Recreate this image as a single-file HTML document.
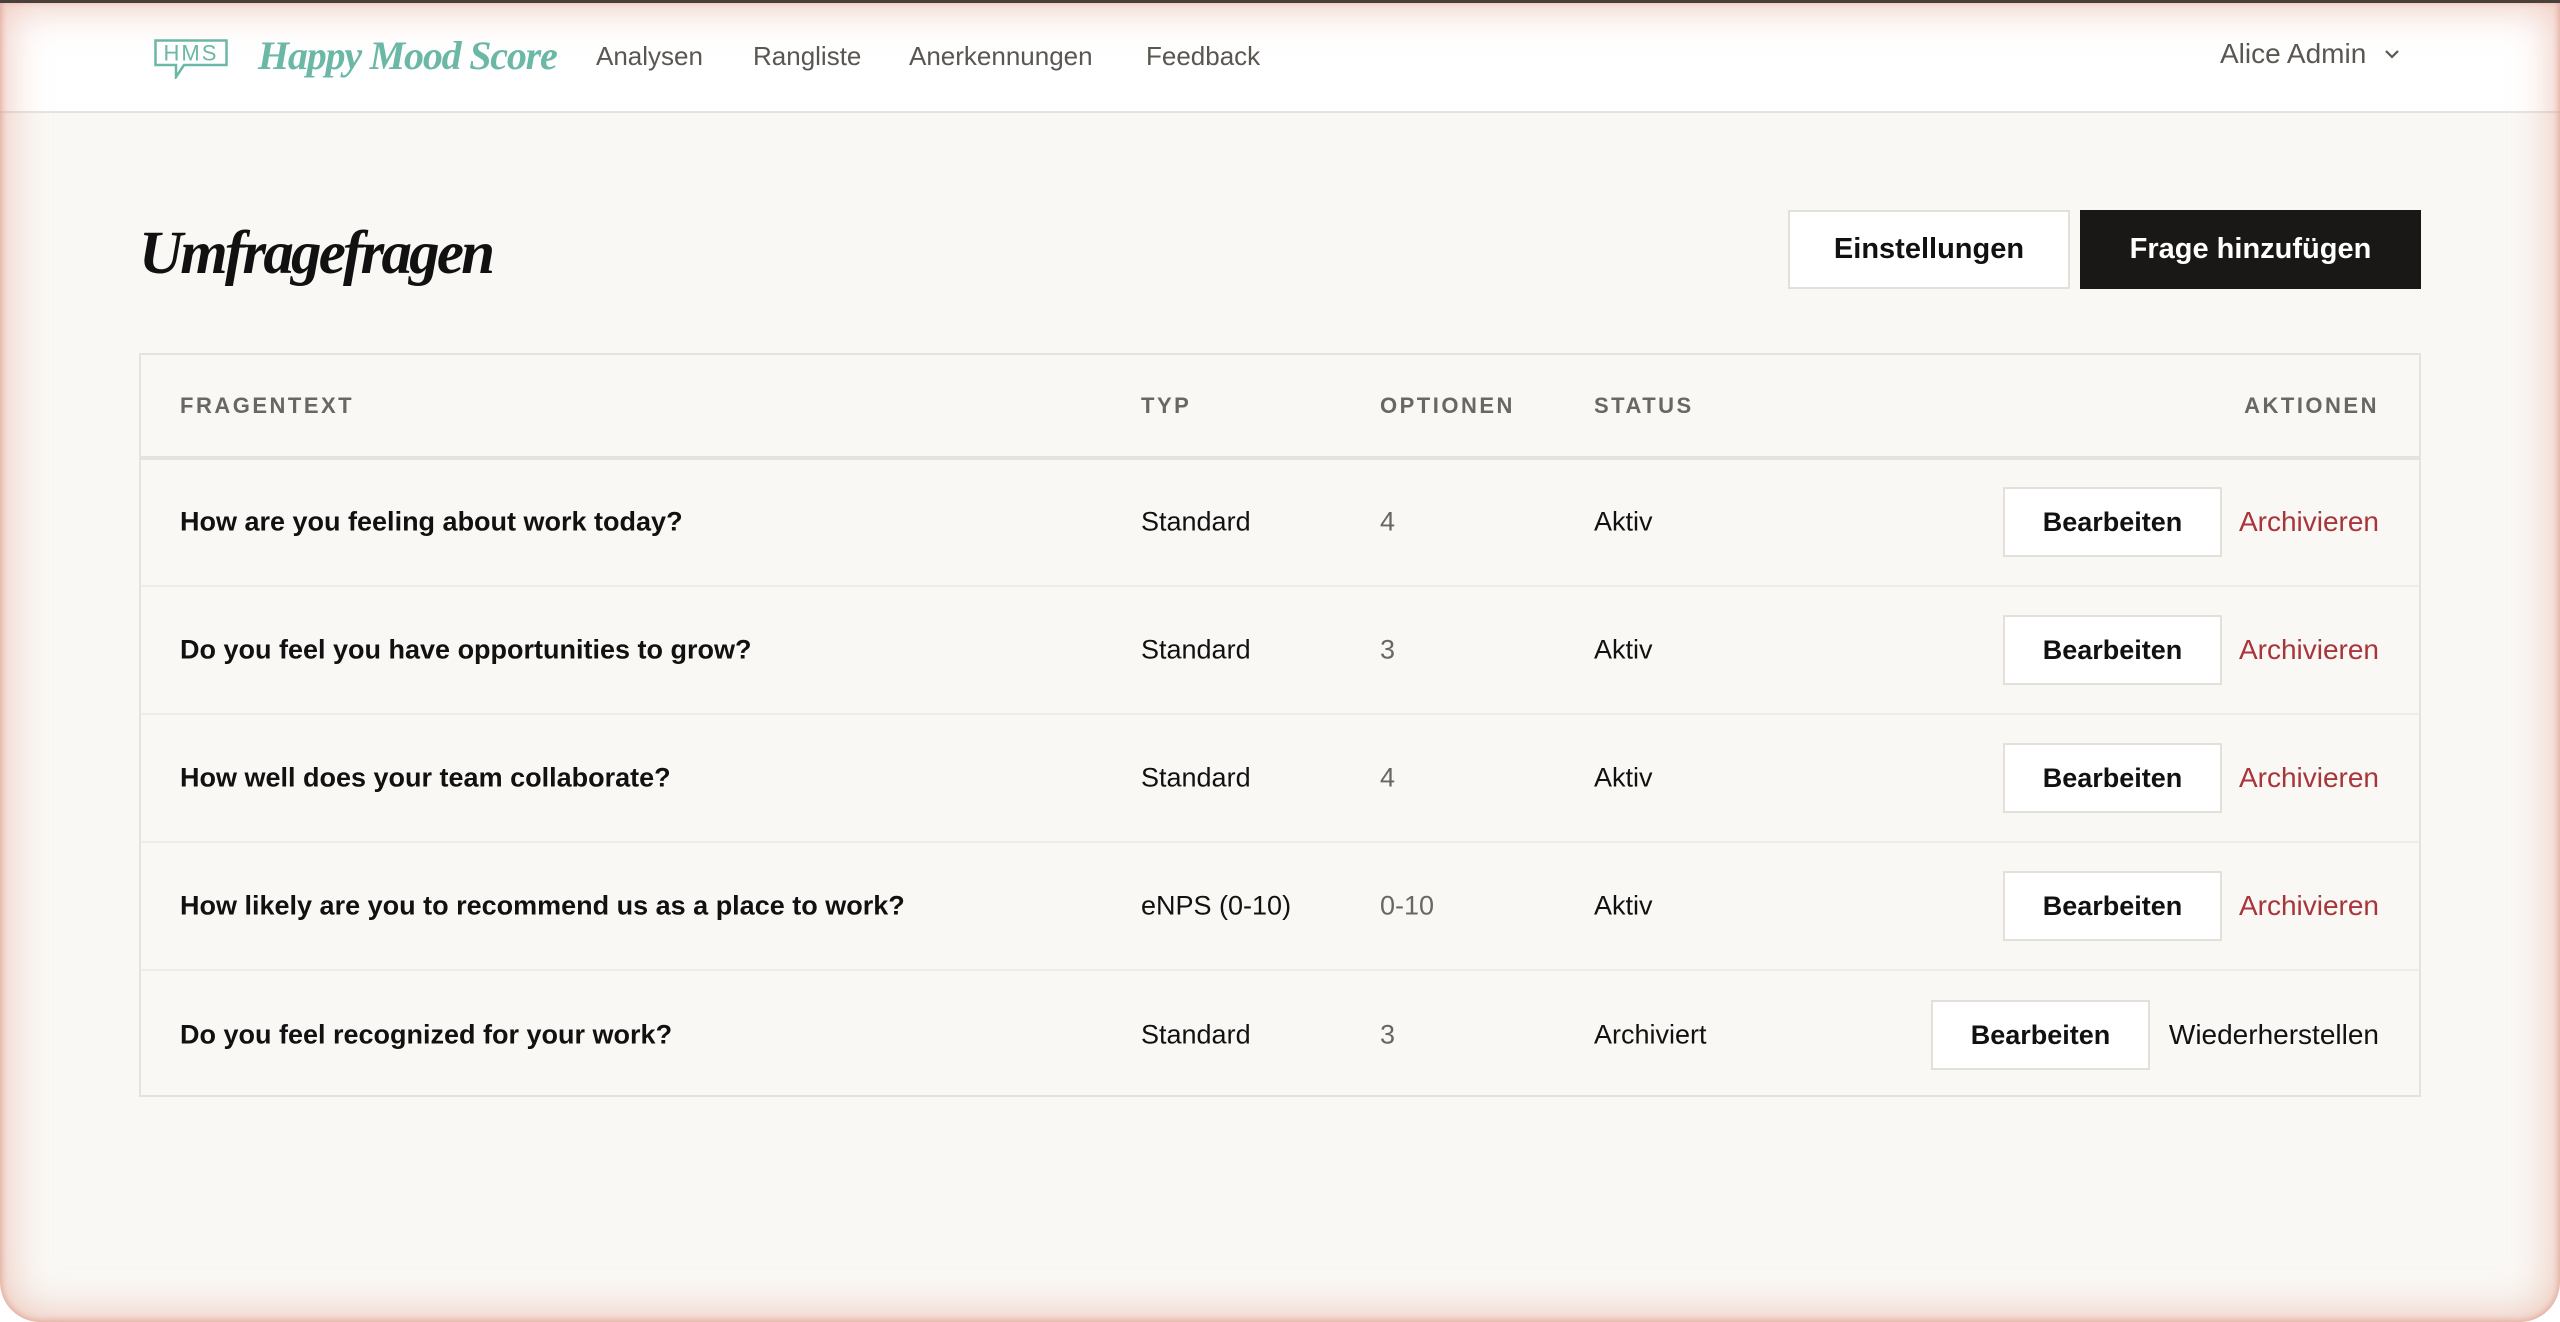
<!DOCTYPE html>
<html><head><meta charset="utf-8">
<style>
*{margin:0;padding:0;box-sizing:border-box}
html,body{width:2560px;height:1322px;background:#fff;overflow:hidden;font-family:"Liberation Sans",sans-serif}
.frame{position:absolute;left:0;top:0;width:2560px;height:1322px;background:#faf8f5;border-radius:0 0 40px 40px;overflow:hidden}
.topline{position:absolute;left:0;top:0;width:2560px;height:3px;background:#4a403a;z-index:11}
.shadow{position:absolute;inset:0;border-radius:0 0 40px 40px;box-shadow:inset 0 0 40px 8px rgba(225,160,140,.55),inset 0 0 6px 2px rgba(215,140,120,.6);pointer-events:none;z-index:10}
.nav{position:absolute;left:0;top:0;width:2560px;height:113px;background:#fff;border-bottom:2px solid #e6e3df}
.abs{position:absolute;white-space:nowrap}
.navi{font-size:26px;color:#5a5652;top:41px}
.logo{left:154px;top:39px;width:74px;height:40px}
.brand{left:258px;top:32px;font-family:"Liberation Serif",serif;font-style:italic;font-weight:bold;font-size:40px;color:#6bb8a6;letter-spacing:-1.2px}
h1{position:absolute;left:139px;top:219px;font-family:"Liberation Serif",serif;font-style:italic;font-weight:bold;font-size:61px;color:#111;letter-spacing:-2.8px}
.btn{position:absolute;display:flex;align-items:center;justify-content:center;font-size:29px;font-weight:bold}
.table{position:absolute;left:139px;top:353px;width:2282px;height:744px;border:2px solid #e6e3df}
.th{font-size:22px;color:#6a6662;letter-spacing:2.5px;font-weight:bold;top:38px}
.hline{position:absolute;left:0;top:101px;width:100%;height:4px;background:#e6e3df}
.row{position:absolute;left:0;width:100%;height:128px;border-bottom:2px solid #f0ede9}
.row .abs{top:50%;transform:translateY(-50%);font-size:27px;color:#111}
.q{font-weight:bold;left:39px}
.typ{left:1000px}
.opt{left:1239px;color:#6a6662!important}
.st{left:1453px}
.bb{position:absolute;top:50%;transform:translateY(-50%);height:70px;width:219px;background:#fff;border:2px solid #e3e0dc;display:flex;align-items:center;justify-content:center;font-size:27px;font-weight:bold;color:#111}
.arch{right:40px;color:#a8353a!important;font-size:28px!important}
</style></head><body>
<div class="frame">
 <div class="topline"></div>
 <div class="nav">
  <svg class="abs logo" viewBox="0 0 74 40"><path d="M1.5 1.5H72.5V26H30L22 38V26H1.5Z" fill="none" stroke="#6bb8a6" stroke-width="2.5"/><text x="37" y="21.5" text-anchor="middle" font-family="Liberation Sans" font-size="22" fill="#6bb8a6" letter-spacing="2">HMS</text></svg>
  <div class="abs brand">Happy Mood Score</div>
  <div class="abs navi" style="left:596px">Analysen</div>
  <div class="abs navi" style="left:753px">Rangliste</div>
  <div class="abs navi" style="left:909px">Anerkennungen</div>
  <div class="abs navi" style="left:1146px">Feedback</div>
  <div class="abs navi" style="left:2220px;top:38px;font-size:28px">Alice Admin</div>
  <svg class="abs" style="left:2384px;top:48px" width="16" height="12" viewBox="0 0 16 12"><path d="M2 3L8 9L14 3" fill="none" stroke="#5a5652" stroke-width="2.2"/></svg>
 </div>
 <h1>Umfragefragen</h1>
 <div class="btn" style="left:1788px;top:210px;width:282px;height:79px;background:#fff;border:2px solid #e3e0dc;color:#111">Einstellungen</div>
 <div class="btn" style="left:2080px;top:210px;width:341px;height:79px;background:#1a1816;color:#fff">Frage hinzufügen</div>
 <div class="table">
  <div class="abs th" style="left:39px">FRAGENTEXT</div>
  <div class="abs th" style="left:1000px">TYP</div>
  <div class="abs th" style="left:1239px">OPTIONEN</div>
  <div class="abs th" style="left:1453px">STATUS</div>
  <div class="abs th" style="right:40px">AKTIONEN</div>
  <div class="hline"></div>
  <div class="row" style="top:104px"><div class="abs q">How are you feeling about work today?</div><div class="abs typ">Standard</div><div class="abs opt">4</div><div class="abs st">Aktiv</div><div class="bb" style="left:1862px">Bearbeiten</div><div class="abs arch">Archivieren</div></div>
  <div class="row" style="top:232px"><div class="abs q">Do you feel you have opportunities to grow?</div><div class="abs typ">Standard</div><div class="abs opt">3</div><div class="abs st">Aktiv</div><div class="bb" style="left:1862px">Bearbeiten</div><div class="abs arch">Archivieren</div></div>
  <div class="row" style="top:360px"><div class="abs q">How well does your team collaborate?</div><div class="abs typ">Standard</div><div class="abs opt">4</div><div class="abs st">Aktiv</div><div class="bb" style="left:1862px">Bearbeiten</div><div class="abs arch">Archivieren</div></div>
  <div class="row" style="top:488px"><div class="abs q">How likely are you to recommend us as a place to work?</div><div class="abs typ">eNPS (0-10)</div><div class="abs opt">0-10</div><div class="abs st">Aktiv</div><div class="bb" style="left:1862px">Bearbeiten</div><div class="abs arch">Archivieren</div></div>
  <div class="row" style="top:616px;border-bottom:none"><div class="abs q">Do you feel recognized for your work?</div><div class="abs typ">Standard</div><div class="abs opt">3</div><div class="abs st">Archiviert</div><div class="bb" style="left:1790px">Bearbeiten</div><div class="abs" style="right:40px;font-size:28px">Wiederherstellen</div></div>
 </div>
 <div class="shadow"></div>
</div>
</body></html>
